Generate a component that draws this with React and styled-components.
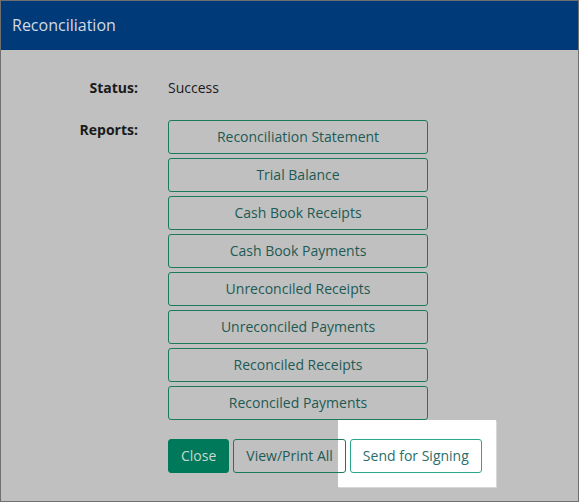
import React from 'react'
import styled, { createGlobalStyle } from 'styled-components'

const GlobalStyle = createGlobalStyle`
  html, body {
    margin: 0;
    padding: 0;
    background: #c0c0c0;
  }
  * { box-sizing: border-box; }
`

const Frame = styled.div`
  width: 579px;
  height: 502px;
  border: 1px solid #6f6f6f;
  background: #c0c0c0;
  font-family: "Open Sans", "Noto Sans", sans-serif;
  display: flex;
  flex-direction: column;
`

const Header = styled.div`
  height: 49px;
  background: #003a78;
  color: #d2dae4;
  font-size: 16px;
  display: flex;
  align-items: center;
  padding-left: 11px;
  padding-bottom: 2px;
`

const Body = styled.div`
  padding-top: 28px;
  display: grid;
  grid-template-columns: 137px 1fr;
  column-gap: 30px;
  row-gap: 22px;
  align-items: start;
`

const Label = styled.div`
  text-align: right;
  font-weight: 700;
  font-size: 14px;
  line-height: 20px;
  color: #1a1a1a;
`

const Value = styled.div`
  font-size: 14px;
  line-height: 20px;
  color: #1a1a1a;
`

const ReportList = styled.div`
  display: flex;
  flex-direction: column;
  gap: 4px;
  width: 260px;
`

const ReportButton = styled.button`
  height: 34px;
  width: 100%;
  background: transparent;
  border: 1px solid #1b7a5e;
  border-radius: 3px;
  color: #1d5a54;
  font-family: inherit;
  font-size: 14px;
  padding: 0 0 1px;
  cursor: pointer;
`

const Actions = styled.div`
  grid-column: 2;
  margin-top: -3px;
  display: flex;
  gap: 4px;
`

const ActionButton = styled.button`
  position: relative;
  z-index: 1;
  height: 34px;
  padding: 0 12px 1px;
  border-radius: 3px;
  font-family: inherit;
  font-size: 14px;
  cursor: pointer;
  background: ${({ primary }) => (primary ? '#00795a' : 'transparent')};
  color: ${({ primary, accent }) =>
    primary ? '#c9d9d2' : accent ? '#2b6e6b' : '#1d5a54'};
  border: 1px solid
    ${({ primary, accent }) =>
      primary ? '#00795a' : accent ? '#2aa68c' : '#1b7a5e'};
`

const Spotlight = styled.div`
  position: relative;
  display: flex;

  &::before {
    content: '';
    position: absolute;
    top: -19px;
    bottom: -14px;
    left: -12px;
    right: -14px;
    background: #ffffff;
    box-shadow: 1px 1px 0 #d8d8d8;
  }
`

const reports = [
  'Reconciliation Statement',
  'Trial Balance',
  'Cash Book Receipts',
  'Cash Book Payments',
  'Unreconciled Receipts',
  'Unreconciled Payments',
  'Reconciled Receipts',
  'Reconciled Payments',
]

const App = () => {
  return (
    <>
      <GlobalStyle />
      <Frame>
        <Header>Reconciliation</Header>
        <Body>
          <Label>Status:</Label>
          <Value>Success</Value>
          <Label>Reports:</Label>
          <ReportList>
            {reports.map((r) => (
              <ReportButton key={r}>{r}</ReportButton>
            ))}
          </ReportList>
          <Actions>
            <ActionButton primary>Close</ActionButton>
            <ActionButton>View/Print All</ActionButton>
            <Spotlight>
              <ActionButton accent>Send for Signing</ActionButton>
            </Spotlight>
          </Actions>
        </Body>
      </Frame>
    </>
  )
}

export default App
